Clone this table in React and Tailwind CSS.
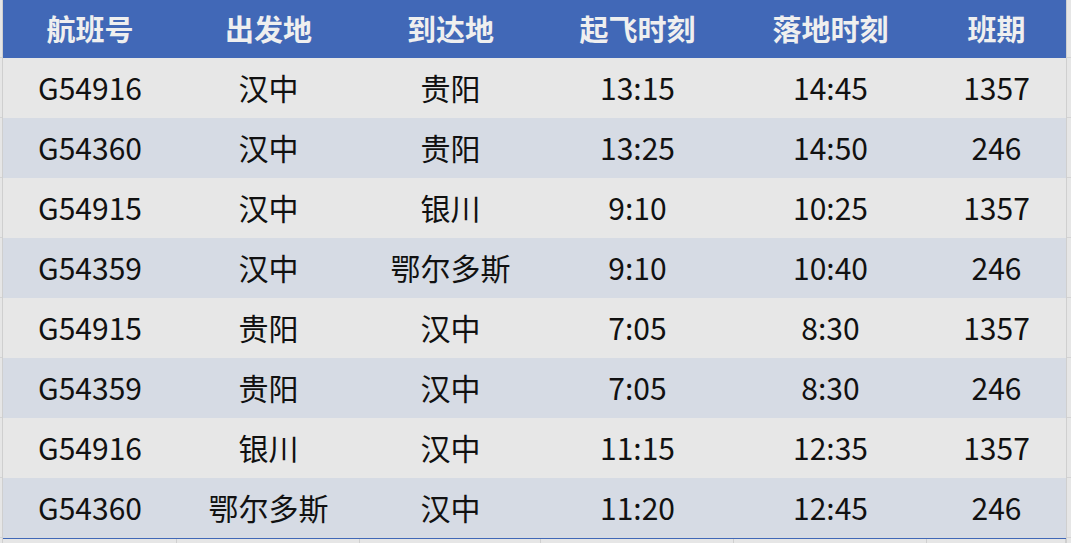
const headers = ['航班号', '出发地', '到达地', '起飞时刻', '落地时刻', '班期'];

const flights = [
  ['G54916', '汉中', '贵阳', '13:15', '14:45', '1357'],
  ['G54360', '汉中', '贵阳', '13:25', '14:50', '246'],
  ['G54915', '汉中', '银川', '9:10', '10:25', '1357'],
  ['G54359', '汉中', '鄂尔多斯', '9:10', '10:40', '246'],
  ['G54915', '贵阳', '汉中', '7:05', '8:30', '1357'],
  ['G54359', '贵阳', '汉中', '7:05', '8:30', '246'],
  ['G54916', '银川', '汉中', '11:15', '12:35', '1357'],
  ['G54360', '鄂尔多斯', '汉中', '11:20', '12:45', '246'],
];

const cols = 'grid grid-cols-[174px_183px_181px_193px_193px_139px]';

const Gutter = () => (
  <div className="flex flex-col">
    <div className="h-[58px] border-b border-[#d4d4d4]" />
    {flights.map((_, i) => (
      <div key={i} className="h-[60px] border-b border-[#d4d4d4]" />
    ))}
  </div>
);

export default function App() {
  return (
    <div
      className="w-[1071px] h-[543px] overflow-hidden bg-[#e6e6e6]"
      style={{ fontFamily: '"Noto Sans CJK SC", "Noto Sans", sans-serif' }}
    >
      <div className="flex">
        <div className="w-[3px] border-r border-[#cfcfcf]">
          <Gutter />
        </div>
        <div className="w-[1063px]">
          <div className={`${cols} h-[58px] bg-[#4168b7] text-[#efefef] font-bold text-[29px]`}>
            {headers.map(h => (
              <div key={h} className="flex items-center justify-center pb-[1px]">{h}</div>
            ))}
          </div>
          {flights.map((row, i) => (
            <div
              key={i}
              className={`${cols} h-[60px] text-[30px] text-[#111] ${i % 2 === 0 ? 'bg-[#e7e7e7]' : 'bg-[#d6dbe4]'} ${i === flights.length - 1 ? 'border-b border-[#4168b7] h-[61px]' : ''}`}
            >
              {row.map((cell, j) => (
                <div key={j} className="flex items-center justify-center pb-[2px]">{cell}</div>
              ))}
            </div>
          ))}
          <div className={`${cols} h-[4px]`}>
            {headers.map(h => (
              <div key={h} className="border-r border-[#cfcfcf]" />
            ))}
          </div>
        </div>
        <div className="w-[5px] border-l border-[#cfcfcf]">
          <Gutter />
        </div>
      </div>
    </div>
  );
}
